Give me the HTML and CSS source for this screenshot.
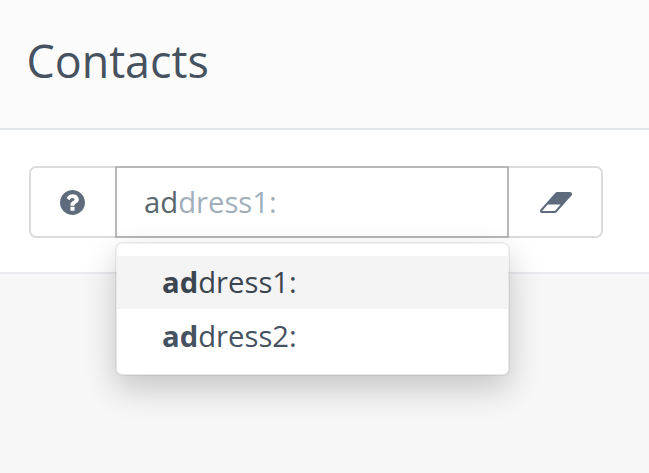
FILE: index.html
```html
<!DOCTYPE html>
<html lang="en">
<head>
<meta charset="utf-8">
<title>Contacts</title>
<link rel="stylesheet" href="styles.css">
</head>
<body>
<header class="page-header"><h1>Contacts</h1></header>
<section class="filter">
  <div class="input-group">
    <button class="addon help" aria-label="Help">
      <svg width="25" height="25" viewBox="0 0 1536 1536"><path d="M896 1248v-192q0-14-9-23t-23-9H672q-14 0-23 9t-9 23v192q0 14 9 23t23 9h192q14 0 23-9t9-23zm256-672q0-88-55.500-163T958 297t-170-41q-243 0-371 213-15 24 8 42l132 100q7 6 19 6 16 0 25-12 53-68 86-92 34-24 86-24 48 0 85.500 26t37.500 59q0 38-20 61t-68 45q-63 28-115.500 86.500T640 892v36q0 14 9 23t23 9h192q14 0 23-9t9-23q0-19 21.500-49.500T972 829q32-18 49-28.500t46-35 44.500-48 28-60.500 12.500-81zm384 192q0 209-103 385.500T1153.500 1433 768 1536t-385.500-103T103 1153.500 0 768t103-385.500T382.500 103 768 0t385.500 103T1433 382.500 1536 768z"/></svg>
    </button>
    <div class="typeahead">
      <div class="field"><span>ad</span><span class="hint">dress1:</span></div>
      <ul class="menu">
        <li class="active"><strong>ad</strong>dress1:</li>
        <li><strong>ad</strong>dress2:</li>
      </ul>
    </div>
    <button class="addon clear" aria-label="Clear">
      <svg width="32" height="21" viewBox="0 256 1920 1280" preserveAspectRatio="none"><path d="M896 1408l336-384H464l-336 384h768zM1909 331q15 34 9.500 71.500T1888 468l-896 1024q-38 44-96 44H128q-38 0-69.500-20.500T12 1461q-15-34-9.500-71.500T33 1324L929 300q38-44 96-44h768q38 0 69.500 20.500T1909 331z"/></svg>
    </button>
  </div>
</section>
</body>
</html>
```
FILE: styles.css
```css
* { box-sizing: border-box; }
body {
  margin: 0;
  height: 473px;
  overflow: hidden;
  background: #f7f7f7;
  color: #46525f;
  font-family: "Open Sans", sans-serif;
  font-size: 29.25px;
}
.page-header {
  height: 130px;
  padding: 30px 26.5px 0;
  background: #fbfbfb;
  border-bottom: 2px solid #e4e7ea;
}
h1 { margin: 0; font-size: 44.8px; line-height: 61px; font-weight: 400; }
.filter {
  height: 144px;
  padding: 36px 29px 0;
  background: #fff;
  border-bottom: 2px solid #eaebef;
}
.input-group { display: flex; width: 574px; height: 72px; }
.addon {
  display: flex;
  align-items: center;
  justify-content: center;
  padding: 0;
  background: #fff;
  border: 2px solid #dcdcdc;
}
.addon svg { display: block; fill: #5d6b7c; }
.help { width: 86px; padding-right: 2px; border-right: 0; border-radius: 7px 0 0 7px; }
.clear { width: 94px; padding-left: 1px; border-left: 0; border-radius: 0 7px 7px 0; }
.typeahead { position: relative; width: 394px; }
.field {
  height: 72px;
  padding-left: 27px;
  border: 2px solid #b7b7b7;
  background: #fff;
  color: #58666e;
  line-height: 69px;
}
.hint { color: #9fafbb; }
.menu {
  position: absolute;
  top: 76px;
  left: 0;
  width: 395px;
  height: 134px;
  margin: 0;
  padding: 12px 0;
  list-style: none;
  background: #fff;
  background-clip: padding-box;
  border: 2px solid rgba(0, 0, 0, .06);
  border-radius: 7px;
  box-shadow: 0 13px 32px rgba(0, 0, 0, .2);
}
.menu li { height: 53px; padding-left: 45px; line-height: 55px; }
.menu .active { background: #f4f4f4; color: #3b4550; line-height: 53px; }
strong { font-weight: 700; }
```
